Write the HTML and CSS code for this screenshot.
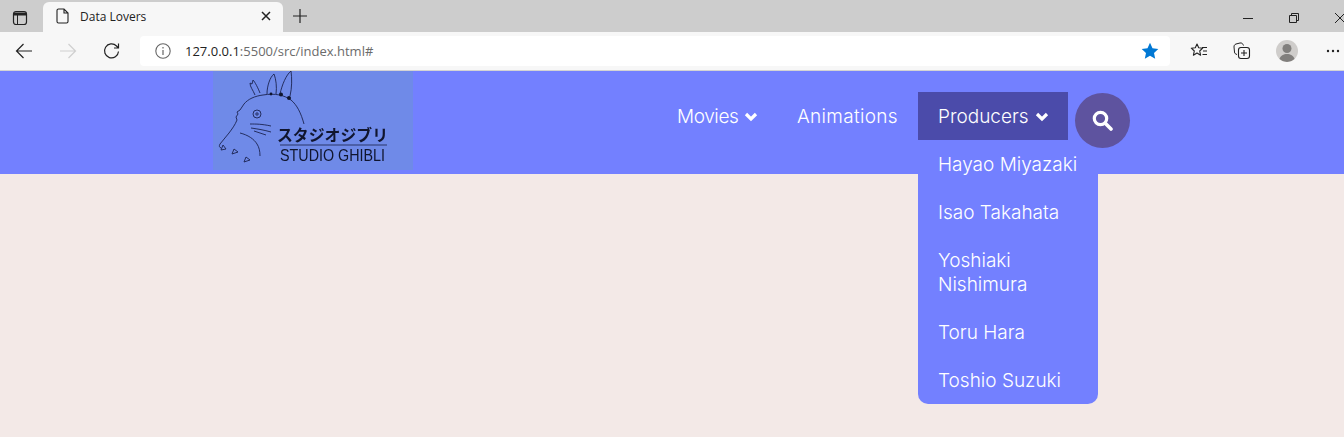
FILE: index.html
```html
<!DOCTYPE html>
<html lang="en">

<head>
  <meta charset="UTF-8" />
  <meta name="viewport" content="width=device-width, initial-scale=1" />
  <title>Data Lovers</title>
  <link rel="stylesheet" href="styles.css">
</head>

<body>
  <div class="tabstrip">
    <svg class="tabs-icon" width="16" height="16" viewBox="0 0 16 16"><rect x="1.500" y="1.500" width="13" height="13" rx="2.500" fill="none" stroke="#222" stroke-width="1.200"/><path d="M2 2.500h12v3H6v9H5v-9H2z" fill="#222"/></svg>
    <div class="tab">
      <svg width="14" height="16" viewBox="0 0 14 16"><path d="M2.500 1h5.500l4 4v8.500a1.500 1.500 0 0 1-1.500 1.500h-8a1.500 1.500 0 0 1-1.500-1.500v-11a1.500 1.500 0 0 1 1.500-1.500zM8 1v4h4" fill="none" stroke="#222" stroke-width="1.100"/></svg>
      <span class="tab-title">Data Lovers</span>
      <svg width="10" height="10" viewBox="0 0 10 10"><path d="M1 1l8 8M9 1l-8 8" stroke="#222" stroke-width="1.500"/></svg>
    </div>
    <svg class="new-tab" width="16" height="16" viewBox="0 0 16 16"><path d="M8 1v14M1 8h14" stroke="#222" stroke-width="1.200"/></svg>
    <div class="window-btns">
      <svg width="12" height="12" viewBox="0 0 12 12"><path d="M1 6.500h10" stroke="#222"/></svg>
      <svg width="12" height="12" viewBox="0 0 12 12"><path d="M1.500 3.500h7v7h-7zM3.500 3.500v-2h7v7h-2" fill="none" stroke="#222"/></svg>
      <svg width="12" height="12" viewBox="0 0 12 12"><path d="M1 1l10 10M11 1l-10 10" stroke="#222"/></svg>
    </div>
  </div>

  <div class="toolbar">
    <svg class="tool-back" width="18" height="18" viewBox="0 0 18 18"><path d="M17 9H1.500M8.500 2L1.500 9l7 7" fill="none" stroke="#222" stroke-width="1.200"/></svg>
    <svg class="tool-forward" width="18" height="18" viewBox="0 0 18 18"><path d="M1 9h15.500M9.500 2l7 7-7 7" fill="none" stroke="#cfcfcf" stroke-width="1.200"/></svg>
    <svg class="tool-reload" width="18" height="18" viewBox="0 0 18 18"><path d="M15.500 9.500a7 7 0 1 1-2-5.500l2 2M15.500 1.500V6H11" fill="none" stroke="#222" stroke-width="1.200"/></svg>
    <div class="addressbar">
      <svg width="18" height="18" viewBox="0 0 18 18"><circle cx="9" cy="9" r="7.200" fill="none" stroke="#666" stroke-width="1.100"/><path d="M9 8v5M9 5v1.500" stroke="#666" stroke-width="1.200"/></svg>
      <span class="url"><span class="url-host">127.0.0.1</span>:5500/src/index.html#</span>
      <svg class="fav-star" width="18" height="18" viewBox="0 0 18 18"><path d="M9 .8l2.500 5.400 5.800.7-4.300 4 1.200 5.800L9 13.800l-5.200 2.900L5 10.900.7 6.900l5.800-.7z" fill="#0078d4"/></svg>
    </div>
    <svg class="tool-favs" width="18" height="18" viewBox="0 0 18 18"><path d="M7 2l1.700 3.800 4 .4-3 2.800.9 4.200L7 11l-3.600 2.200.9-4.200-3-2.800 4-.4z" fill="none" stroke="#222" stroke-width="1.100" stroke-linejoin="round"/><path d="M12 5.500h5M13 9h4M12.500 12.500h4.500" stroke="#222" stroke-width="1.100"/></svg>
    <svg class="tool-collections" width="18" height="18" viewBox="0 0 18 18"><path d="M4 12.500c-1.500-.5-2.500-1-2.500-2.500l-.5-5c0-1.500 .5-2.500 2-3l4-1c1.500-.2 2.500 .3 3 1.500l.5 1" fill="none" stroke="#222"/><rect x="5.500" y="5.500" width="11" height="11" rx="2.500" fill="#f7f7f7" stroke="#222" stroke-width="1.100"/><path d="M11 8v6M8 11h6" stroke="#222" stroke-width="1.100"/></svg>
    <div class="avatar">
      <svg width="22" height="22" viewBox="0 0 22 22"><circle cx="11" cy="11" r="11" fill="#cfcdcb"/><circle cx="11" cy="8.500" r="4.500" fill="#817f7d"/><path d="M3.500 19c1-3.500 4-5 7.500-5s6.500 1.500 7.500 5a11 11 0 0 1-15 0z" fill="#817f7d"/></svg>
    </div>
    <svg class="tool-more" width="14" height="4" viewBox="0 0 14 4"><circle cx="2" cy="2" r="1.200" fill="#222"/><circle cx="7" cy="2" r="1.200" fill="#222"/><circle cx="12" cy="2" r="1.200" fill="#222"/></svg>
  </div>

  <header class="site-header">
    <svg class="logo" width="200" height="99" viewBox="0 0 200 99">
      <rect width="200" height="99" fill="#6f8ae8"/>
      <g class="logo-art">
        <g fill="none" stroke="#1c2450" stroke-width="0.900">
          <path d="M42 24c-2-5-5-8-5-12l2 1 1-4c2 2 5 8 7 13"/>
          <path d="M54 23c0-8 3-17 7-20 2 5 3 13 2 20"/>
          <path d="M67 23c2-9 6-19 11-23 1 7 1 17-1 25"/>
          <path d="M50 24c-8 1-15 4-19 9l-4 6-3 2 1 2-2 3 1 3c-2 5-5 9-8 13l-9 11c-1 2-1 3 1 4"/>
          <path d="M50 24c12-2 21 0 28 5 6 5 10 13 13 24"/>
          <circle cx="44" cy="43" r="4"/>
          <circle cx="44" cy="43" r="1.200"/>
          <path d="M37 53c6 0 12 0 21 2M38 57c7 1 13 2 20 4M41 60c4 1 8 3 12 4"/>
          <path d="M27 62c8 2 14 6 17 11 2 3 3 7 3 12"/>
          <path d="M8 79l2-5 3 4zM19 83l2-5 4 3zM31 91l2-5 4 3z"/>
        </g>
        <g fill="#10152e">
          <circle cx="68" cy="23.500" r="2"/>
          <circle cx="58" cy="23" r="1.400"/>
          <circle cx="76" cy="27" r="2"/>
        </g>
        <text class="logo-jp" x="64" y="70" textLength="111" lengthAdjust="spacingAndGlyphs">スタジオジブリ</text>
        <path d="M67 74h107" stroke="#2a3468" stroke-width="1.200"/>
        <text class="logo-en" x="67" y="90" textLength="105" lengthAdjust="spacingAndGlyphs">STUDIO GHIBLI</text>
      </g>
    </svg>
    <nav class="main-nav">
      <a class="nav-link nav-movies" href="#">Movies
        <svg class="chevron" width="14" height="11" viewBox="0 0 14 11"><path d="M2 3l5 5 5-5" fill="none" stroke="#fff" stroke-width="3.200"/></svg>
      </a>
      <a class="nav-link nav-animations" href="#">Animations</a>
      <div class="nav-item">
        <a class="nav-link active" href="#">Producers
          <svg class="chevron" width="14" height="11" viewBox="0 0 14 11"><path d="M2 3l5 5 5-5" fill="none" stroke="#fff" stroke-width="3.200"/></svg>
        </a>
        <ul class="dropdown">
          <li>Hayao Miyazaki</li>
          <li>Isao Takahata</li>
          <li>Yoshiaki Nishimura</li>
          <li>Toru Hara</li>
          <li>Toshio Suzuki</li>
        </ul>
      </div>
      <button class="search-btn" type="button" aria-label="Search">
        <svg width="21" height="21" viewBox="0 0 21 21"><circle cx="8.500" cy="8.500" r="6.200" fill="none" stroke="#fff" stroke-width="3.200"/><path d="M13.500 13.500l5.500 5.500" stroke="#fff" stroke-width="3.600" stroke-linecap="round"/></svg>
      </button>
    </nav>
  </header>
</body>

</html>
```
FILE: styles.css
```css
* {
  box-sizing: border-box;
}

html,
body {
  margin: 0;
  padding: 0;
  height: 100%;
}

body {
  background: #f3e9e7;
  font-family: "Inter", sans-serif;
  overflow: hidden;
}

/* browser chrome */
.tabstrip {
  display: flex;
  align-items: flex-end;
  height: 32px;
  background: #cdcdcd;
  position: relative;
}

.tabs-icon {
  margin: 0 15px 6px 12px;
}

.tab {
  display: flex;
  align-items: center;
  width: 240px;
  height: 30px;
  padding: 0 12px 2px 13px;
  background: #f7f7f7;
  border-radius: 6px 6px 0 0;
}

.tab-title {
  flex: 1;
  margin-left: 10px;
  font: 12px "Open Sans", sans-serif;
  color: #222;
}

.new-tab {
  margin: 0 0 8px 9px;
}

.window-btns {
  display: flex;
  gap: 34px;
  margin: 0 -2px 8px auto;
}

.toolbar {
  display: flex;
  align-items: center;
  height: 39px;
  background: #f7f7f7;
  border-bottom: 1px solid #d4d4d4;
}

.tool-back {
  margin-left: 15px;
}

.tool-forward {
  margin-left: 26px;
}

.tool-reload {
  margin-left: 26px;
}

.addressbar {
  display: flex;
  align-items: center;
  width: 1030px;
  height: 30px;
  margin-left: 19px;
  padding: 0 11px 0 14px;
  background: #fff;
  border-radius: 4px;
}

.url {
  flex: 1;
  margin-left: 13px;
  font: 13px "Open Sans", sans-serif;
  color: #6b6b6b;
}

.url-host {
  color: #222;
}

.tool-favs {
  margin-left: 20px;
}

.tool-collections {
  margin-left: 25px;
}

.avatar {
  display: flex;
  margin-left: 25px;
}

.tool-more {
  margin-left: 28px;
}

/* page header */
.site-header {
  display: flex;
  height: 103px;
  padding-left: 213px;
  background: #7380ff;
}

.logo {
  display: block;
  flex-shrink: 0;
}

.logo-art {
  filter: blur(0.5px);
}

.logo-jp {
  font: 700 16px "Noto Sans CJK JP", sans-serif;
  fill: #10152e;
}

.logo-en {
  font: 400 17px "Liberation Sans", sans-serif;
  fill: #10152e;
}

.main-nav {
  display: flex;
  align-items: flex-start;
  margin-left: 244px;
  padding-top: 21px;
}

.nav-link {
  display: flex;
  align-items: center;
  gap: 6px;
  height: 48px;
  padding-left: 20px;
  font-size: 19px;
  font-weight: 300;
  color: #fff;
  text-decoration: none;
  white-space: nowrap;
}

.nav-movies {
  width: 120px;
  letter-spacing: -0.4px;
}

.nav-animations {
  width: 141px;
  letter-spacing: 0.3px;
}

.chevron {
  flex-shrink: 0;
}

.nav-item {
  position: relative;
}

.nav-link.active {
  width: 150px;
  background: #4b4baa;
}

.dropdown {
  position: absolute;
  top: 48px;
  left: 0;
  width: 180px;
  margin: 0;
  padding: 0;
  list-style: none;
  background: #7380ff;
  border-radius: 0 0 10px 10px;
}

.dropdown li {
  padding: 13px 20px 11px;
  font-size: 19px;
  font-weight: 300;
  line-height: 24px;
  color: #fff;
}

.search-btn {
  position: relative;
  display: flex;
  align-items: center;
  justify-content: center;
  width: 55px;
  height: 55px;
  margin: 1px 0 0 7px;
  padding: 0;
  border: none;
  border-radius: 50%;
  background: #5e539f;
}
```
